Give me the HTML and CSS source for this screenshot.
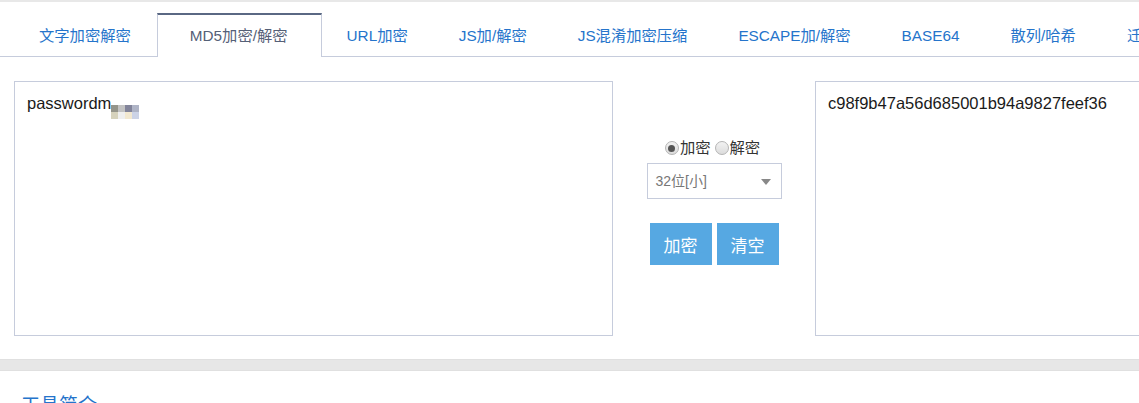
FILE: index.html
```html
<!DOCTYPE html>
<html lang="zh-CN">
<head>
    <meta charset="UTF-8">
    <meta name="viewport" content="width=device-width, initial-scale=1.0">
    <title>MD5加密/解密</title>
    <link rel="stylesheet" href="styles.css">
</head>
<body>
    <div class="top-strip"></div>

    <ul class="tabs">
        <li><a href="#">文字加密解密</a></li>
        <li class="active"><a href="#">MD5加密/解密</a></li>
        <li><a href="#">URL加密</a></li>
        <li><a href="#">JS加/解密</a></li>
        <li><a href="#">JS混淆加密压缩</a></li>
        <li><a href="#">ESCAPE加/解密</a></li>
        <li><a href="#">BASE64</a></li>
        <li><a href="#">散列/哈希</a></li>
        <li><a href="#">迁移</a></li>
    </ul>

    <section class="tool">
        <div class="box">passwordm<span class="mosaic"><i class="m1"></i><i class="m2"></i><i class="m3"></i><i class="m4"></i><i class="m5"></i><i class="m6"></i><i class="m7"></i><i class="m8"></i></span></div>

        <div class="controls">
            <div class="mode">
                <label><span class="radio checked"></span>加密</label>
                <label><span class="radio"></span>解密</label>
            </div>
            <div class="select">32位[小]<span class="arrow"></span></div>
            <div class="buttons">
                <button class="btn">加密</button>
                <button class="btn">清空</button>
            </div>
        </div>

        <div class="box">c98f9b47a56d685001b94a9827feef36</div>
    </section>

    <div class="divider"></div>

    <h3 class="intro-title">工具简介</h3>
</body>
</html>
```

FILE: styles.css
```css
* {
    margin: 0;
    padding: 0;
    box-sizing: border-box;
}

body {
    font-family: 'Liberation Sans', 'Noto Sans CJK SC', sans-serif;
    font-size: 15px;
    color: #222;
    background-color: #ffffff;
    overflow: hidden;
}

.top-strip {
    height: 2px;
    background-color: #e8e8e8;
}

.tabs {
    list-style: none;
    display: flex;
    margin-top: 11px;
    padding-left: 14px;
    border-bottom: 1px solid #c6ccdc;
    white-space: nowrap;
    font-size: 15.3px;
}

.tabs li {
    height: 43px;
    line-height: 45px;
    padding: 0 26px 0 25px;
    flex-shrink: 0;
}

.tabs a {
    color: #2574cb;
    text-decoration: none;
}

.tabs li.active {
    padding: 0 33px 0 32px;
    border-top: 2px solid #5a6883;
    border-left: 1px solid #c6ccdc;
    border-right: 1px solid #c6ccdc;
    background-color: #ffffff;
    margin-bottom: -1px;
    height: 44px;
    line-height: 41px;
}

.tabs li.active a {
    color: #556077;
}

.tool {
    display: flex;
    padding: 24px 0 0 14px;
}

.box {
    flex-shrink: 0;
    width: 599px;
    height: 255px;
    border: 1px solid #c6ccdc;
    padding: 12px 12px;
    font-size: 16.5px;
    color: #1a1a1a;
}

.mosaic {
    display: inline-grid;
    grid-template-columns: repeat(4, 7px);
    grid-template-rows: 7px 7px;
    vertical-align: -3px;
}

.mosaic i { display: block; }
.m1 { background-color: #94948a; }
.m2 { background-color: #c2c2c2; }
.m3 { background-color: #82849a; }
.m4 { background-color: #afb4c6; }
.m5 { background-color: #d6d2bc; }
.m6 { background-color: #efefef; }
.m7 { background-color: #f2e8d0; }
.m8 { background-color: #ccd3e6; }

.controls {
    flex-shrink: 0;
    width: 202px;
    display: flex;
    flex-direction: column;
    align-items: center;
    padding-top: 57px;
}

.mode {
    display: flex;
    gap: 4px;
    font-size: 15.3px;
    color: #333;
    line-height: 20px;
    margin-left: -3px;
}

.mode label {
    display: flex;
    align-items: center;
}

.radio {
    width: 14px;
    height: 14px;
    border: 1px solid #b4b4b4;
    border-radius: 50%;
    background: linear-gradient(#f2f2f2, #dcdcdc);
    margin-right: 1px;
    display: flex;
    align-items: center;
    justify-content: center;
}

.radio.checked::after {
    content: "";
    width: 7px;
    height: 7px;
    border-radius: 50%;
    background-color: #555;
}

.select {
    position: relative;
    width: 135px;
    height: 36px;
    margin-top: 5px;
    border: 1px solid #c6ccdc;
    padding-left: 8px;
    line-height: 34px;
    font-size: 14px;
    color: #777;
}

.arrow {
    position: absolute;
    right: 10px;
    top: 15px;
    border-left: 5px solid transparent;
    border-right: 5px solid transparent;
    border-top: 6px solid #888;
}

.buttons {
    display: flex;
    gap: 5px;
    margin-top: 24px;
}

.btn {
    width: 62px;
    height: 42px;
    border: none;
    background-color: #56a8e2;
    color: #ffffff;
    font-family: 'Liberation Sans', 'Noto Sans CJK SC', sans-serif;
    font-size: 17px;
    cursor: pointer;
}

.divider {
    height: 12px;
    margin-top: 23px;
    background-color: #e7e7e7;
    border-top: 1px solid #e0e0e0;
    border-bottom: 1px solid #e0e0e0;
}

.intro-title {
    font-weight: normal;
    font-size: 19px;
    color: #2574cb;
    padding: 19px 0 0 21px;
}
```
